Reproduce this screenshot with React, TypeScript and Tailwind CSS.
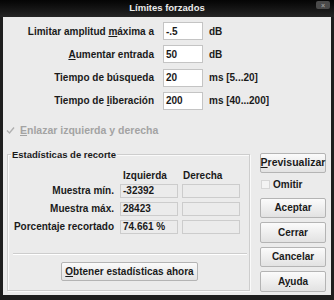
import React from "react";

const font = { fontFamily: '"Liberation Sans", Arial, sans-serif' };

function U({ children }: { children: React.ReactNode }) {
    return <span className="underline underline-offset-[1px]">{children}</span>;
}

function ParamRow({
    label,
    value,
    unit,
}: {
    label: React.ReactNode;
    value: string;
    unit: string;
}) {
    return (
        <div className="flex h-[18px] items-center">
            <div className="w-[152px] pr-[1px] text-right">{label}</div>
            <div className="ml-[8px] flex h-[18px] w-[40px] items-center border border-[#c4c4c4] bg-white pl-[2px]">
                {value}
            </div>
            <div className="ml-[6px]">{unit}</div>
        </div>
    );
}

function WinButton({
    children,
    className = "",
}: {
    children: React.ReactNode;
    className?: string;
}) {
    return (
        <div
            className={
                "flex items-center justify-center rounded-[2px] border border-[#b4b4b4] bg-gradient-to-b from-[#fbfbfb] to-[#e2e2e2] " +
                className
            }
        >
            {children}
        </div>
    );
}

function StatRow({ label, left }: { label: string; left: string }) {
    return (
        <div className="flex h-[14px] items-center">
            <div className="w-[106px] text-right">{label}</div>
            <div className="ml-[6px] flex h-[14px] w-[58px] items-center border border-[#cccccc] pl-[2px]">
                {left}
            </div>
            <div className="ml-[4px] h-[14px] w-[58px] border border-[#cccccc]" />
        </div>
    );
}

export default function App() {
    return (
        <div
            className="flex h-[300px] w-[334px] flex-col bg-[#1e1e1e] text-[10px] font-bold text-[#1a1a1a]"
            style={font}
        >
            {/* title bar */}
            <div className="relative flex h-[17px] shrink-0 items-center justify-center bg-gradient-to-b from-[#050505] to-[#262626]">
                <span className="text-[9.5px] text-[#ececec]">Límites forzados</span>
                <div className="absolute right-[4px] top-[1px] flex h-[8px] w-[14px] items-center justify-center rounded-[2px] bg-[#4a4a4a] text-[7px] leading-none text-[#9a9a9a]">
                    ×
                </div>
            </div>

            {/* body */}
            <div className="mx-[3px] mb-[5px] flex flex-1 flex-col bg-[#ebebeb]">
                <div className="flex flex-col gap-[5.3px] pt-[5px]">
                    <ParamRow
                        label={
                            <>
                                Limitar amplitud <U>m</U>áxima a
                            </>
                        }
                        value="-.5"
                        unit="dB"
                    />
                    <ParamRow
                        label={
                            <>
                                <U>A</U>umentar entrada
                            </>
                        }
                        value="50"
                        unit="dB"
                    />
                    <ParamRow label="Tiempo de búsqueda" value="20" unit="ms [5...20]" />
                    <ParamRow
                        label={
                            <>
                                Tiempo de <U>l</U>iberación
                            </>
                        }
                        value="200"
                        unit="ms [40...200]"
                    />
                </div>

                {/* link checkbox (disabled) */}
                <div className="mt-[15px] flex h-[12px] items-center text-[#a3a3a3]">
                    <div className="ml-[3px] flex h-[9px] w-[9px] items-center justify-center">
                        <svg width="9" height="9" viewBox="0 0 9 9">
                            <path
                                d="M1 4.5 L3.5 7 L8 1.5"
                                fill="none"
                                stroke="#b0b0b0"
                                strokeWidth="1.4"
                            />
                        </svg>
                    </div>
                    <span className="ml-[5px] text-[10.5px]">
                        <U>E</U>nlazar izquierda y derecha
                    </span>
                </div>

                <div className="mt-[16px] flex">
                    {/* group box */}
                    <div className="relative ml-[4px] mt-[1px] flex h-[137px] w-[243px] flex-col border border-[#cdcdcd] shadow-[inset_1px_1px_0_#fafafa,1px_1px_0_#fafafa]">
                        <div className="absolute -top-[7px] left-[3px] bg-[#ebebeb] px-[1px] text-[9.5px]">
                            Estadísticas de recorte
                        </div>
                        <div className="mt-[15px] flex h-[12px] items-center">
                            <span className="ml-[115px]">Izquierda</span>
                            <span className="ml-[16px]">Derecha</span>
                        </div>
                        <div className="mt-[2px] flex flex-col gap-[4px]">
                            <StatRow label="Muestra mín." left="-32392" />
                            <StatRow label="Muestra máx." left="28423" />
                            <StatRow label="Porcentaje recortado" left="74.661 %" />
                        </div>
                        <div className="ml-[5px] mr-[2px] mt-[19px] h-[2px] border-b border-t border-b-white border-t-[#cdcdcd]" />
                        <WinButton className="ml-[53px] mt-[7px] h-[19px] w-[137px]">
                            <span>
                                <U>O</U>btener estadísticas ahora
                            </span>
                        </WinButton>
                    </div>

                    {/* right column */}
                    <div className="ml-[10px] flex w-[66px] flex-col">
                        <WinButton className="h-[20px] border-[#9c9c9c]">
                            <span className="text-[10.5px]">
                                <U>P</U>revisualizar
                            </span>
                        </WinButton>
                        <div className="mt-[7px] flex h-[10px] items-center">
                            <div className="ml-[1px] h-[9px] w-[9px] border border-[#d6d6d6] bg-[#f3f3f3]" />
                            <span className="ml-[3px]">Omitir</span>
                        </div>
                        <WinButton className="mt-[8px] h-[20px]">Aceptar</WinButton>
                        <WinButton className="mt-[4px] h-[21px]">Cerrar</WinButton>
                        <WinButton className="mt-[4px] h-[20px]">Cancelar</WinButton>
                        <WinButton className="mt-[4px] h-[21px]">
                            <span>
                                A<U>y</U>uda
                            </span>
                        </WinButton>
                    </div>
                </div>
            </div>
        </div>
    );
}
